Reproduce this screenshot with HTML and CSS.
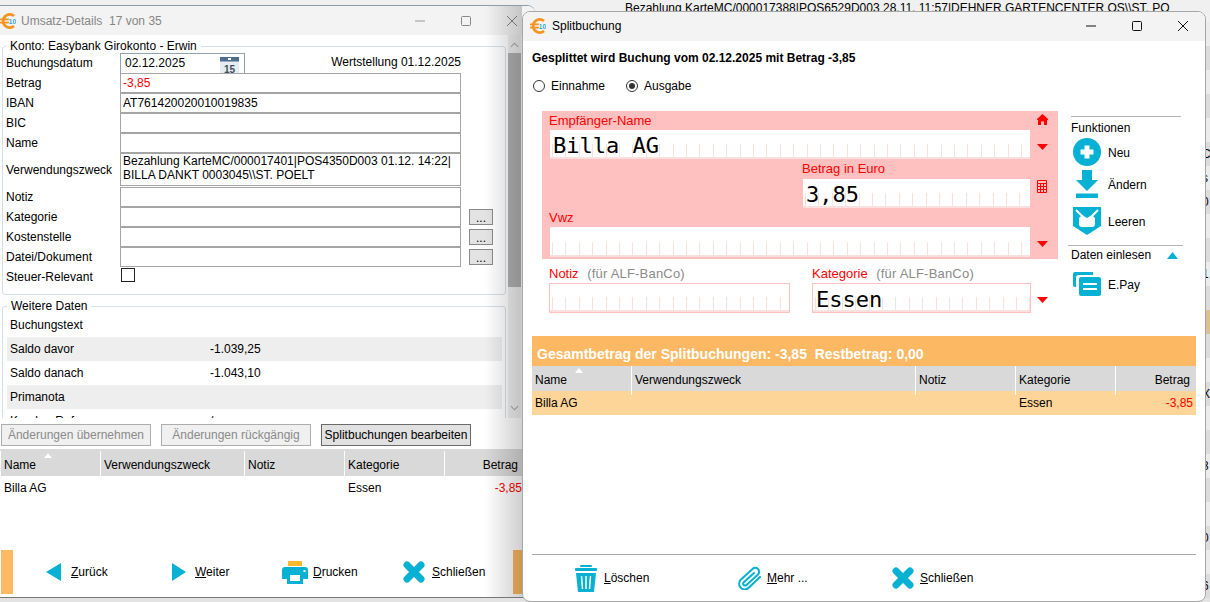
FILE: index.html
```html
<!DOCTYPE html>
<html lang="de">
<head>
<meta charset="utf-8">
<title>Splitbuchung</title>
<link rel="stylesheet" href="styles.css">
</head>
<body>
<div class="desktop">

  <div class="backdrop">
    <div class="backdrop-head">Bezahlung KarteMC/000017388|POS6529D003 28.11. 11:57|DEHNER GARTENCENTER OS\\ST. PO</div>
    <div class="backdrop-rows">
      <div></div><div></div><div></div><div></div><div></div>
      <div>C</div><div>s</div><div>0</div><div></div><div></div>
      <div>1</div><div></div><div class="tan"></div><div></div><div></div>
      <div>X</div><div>(</div><div></div><div>3</div><div></div>
      <div></div><div>0</div><div></div><div>6</div>
    </div>
  </div>

  <section class="win win-left">
    <header class="titlebar titlebar-dim">
      <svg class="logo" viewBox="0 0 16 16"><path d="M14 3A6.6 6.6 0 1 0 14 13" fill="none" stroke="#f7941d" stroke-width="2.8"/><path d="M0 6.400H9M0 9.600H9" stroke="#f7941d" stroke-width="1.800"/><text x="8.800" y="10.600" class="logo-num">10</text></svg>
      <span class="title-text">Umsatz-Details  17 von 35</span>
      <div class="controls">
        <svg viewBox="0 0 12 12"><path d="M1 6H11" stroke="#999" fill="none"/></svg>
        <svg viewBox="0 0 12 12"><rect x="1.5" y="1.5" width="9" height="9" rx="1" stroke="#888" fill="none"/></svg>
        <svg viewBox="0 0 12 12"><path d="M1 1L11 11M11 1L1 11" stroke="#888" fill="none"/></svg>
      </div>
    </header>

    <div class="scrollarea">
      <div class="scroll-main">
        <fieldset class="group">
          <legend>Konto: Easybank Girokonto - Erwin</legend>
          <div class="frow">
            <label class="flabel">Buchungsdatum</label>
            <div class="fwide">
              <div class="datebox">
                <span>02.12.2025</span>
                <svg class="cal" viewBox="0 0 19 17"><rect width="19" height="17" fill="#e6ecf0"/><rect width="19" height="4.5" fill="#4f6f90"/><rect x="8" y="1" width="3" height="2" fill="#fff"/><text x="9.5" y="15.5" class="cal-num">15</text></svg>
              </div>
              <span class="wert">Wertstellung 01.12.2025</span>
            </div>
          </div>
          <div class="frow"><label class="flabel">Betrag</label><div class="field red">-3,85</div></div>
          <div class="frow"><label class="flabel">IBAN</label><div class="field">AT761420020010019835</div></div>
          <div class="frow"><label class="flabel">BIC</label><div class="field"></div></div>
          <div class="frow"><label class="flabel">Name</label><div class="field"></div></div>
          <div class="frow frow-tall"><label class="flabel">Verwendungszweck</label><div class="field field-tall">Bezahlung KarteMC/000017401|POS4350D003 01.12. 14:22|<br>BILLA DANKT 0003045\\ST. POELT</div></div>
          <div class="frow"><label class="flabel">Notiz</label><div class="field"></div></div>
          <div class="frow"><label class="flabel">Kategorie</label><div class="field"></div><button class="dots">...</button></div>
          <div class="frow"><label class="flabel">Kostenstelle</label><div class="field"></div><button class="dots">...</button></div>
          <div class="frow"><label class="flabel">Datei/Dokument</label><div class="field"></div><button class="dots">...</button></div>
          <div class="frow"><label class="flabel">Steuer-Relevant</label><span class="check"></span></div>
        </fieldset>

        <fieldset class="group group-more">
          <legend>Weitere Daten</legend>
          <div class="drow"><span class="dkey">Buchungstext</span><span></span></div>
          <div class="drow alt"><span class="dkey">Saldo davor</span><span>-1.039,25</span></div>
          <div class="drow"><span class="dkey">Saldo danach</span><span>-1.043,10</span></div>
          <div class="drow alt"><span class="dkey">Primanota</span><span></span></div>
          <div class="drow"><span class="dkey">Kunden-Referenz</span><span>/</span></div>
        </fieldset>
      </div>
      <div class="scrollbar">
        <svg class="sb-arrow" viewBox="0 0 10 6"><path d="M1 5L5 1L9 5" fill="none" stroke="#aaa" stroke-width="1.2"/></svg>
        <div class="sb-thumb"></div>
        <svg class="sb-arrow sb-down" viewBox="0 0 10 6"><path d="M1 1L5 5L9 1" fill="none" stroke="#aaa" stroke-width="1.2"/></svg>
      </div>
    </div>

    <div class="actions">
      <button class="act" disabled>Änderungen übernehmen</button>
      <button class="act" disabled>Änderungen rückgängig</button>
      <button class="act act-on">Splitbuchungen bearbeiten</button>
    </div>

    <div class="strip"></div>
    <div class="tbl tbl-left tbl-head">
      <div class="sorted">Name</div><div>Verwendungszweck</div><div>Notiz</div><div>Kategorie</div><div class="num">Betrag</div>
    </div>
    <div class="tbl tbl-left tbl-row">
      <div>Billa AG</div><div></div><div></div><div>Essen</div><div class="num red">-3,85</div>
    </div>

    <footer class="leftfoot">
      <span class="orange-bar"></span>
      <a class="tool tool-back"><svg width="15" height="18" viewBox="0 0 15 18"><path d="M15 0V18L0 9Z" fill="#07b1d3"/></svg><span><u>Z</u>urück</span></a>
      <a class="tool tool-next"><svg width="14" height="18" viewBox="0 0 14 18"><path d="M0 0V18L14 9Z" fill="#07b1d3"/></svg><span><u>W</u>eiter</span></a>
      <a class="tool tool-print"><svg width="26" height="23" viewBox="0 0 26 23"><rect x="6" y="0" width="14" height="5" fill="#fdb92b"/><path d="M3 6H23A3 3 0 0 1 26 9V18H21V23H5V18H0V9A3 3 0 0 1 3 6Z" fill="#07b1d3"/><rect x="8" y="14" width="10" height="6" fill="#fff"/><rect x="21.500" y="9" width="2" height="2" fill="#fff"/></svg><span><u>D</u>rucken</span></a>
      <a class="tool tool-close"><svg width="22" height="22" viewBox="0 0 22 22"><path d="M4 4L18 18M18 4L4 18" stroke="#07b1d3" stroke-width="7" stroke-linecap="round"/></svg><span><u>S</u>chließen</span></a>
      <span class="orange-bar orange-bar-end"></span>
    </footer>
    <div class="win-shadow"></div>
  </section>

  <section class="win win-right">
    <header class="titlebar titlebar-main">
      <svg class="logo" viewBox="0 0 16 16"><path d="M14 3A6.6 6.6 0 1 0 14 13" fill="none" stroke="#f7941d" stroke-width="2.8"/><path d="M0 6.400H9M0 9.600H9" stroke="#f7941d" stroke-width="1.800"/><text x="8.800" y="10.600" class="logo-num">10</text></svg>
      <span class="title-text">Splitbuchung</span>
      <div class="controls controls-dark">
        <svg viewBox="0 0 12 12"><path d="M1 6H11" stroke="#111" fill="none"/></svg>
        <svg viewBox="0 0 12 12"><rect x="1.5" y="1.5" width="9" height="9" rx="1" stroke="#111" fill="none"/></svg>
        <svg viewBox="0 0 12 12"><path d="M1 1L11 11M11 1L1 11" stroke="#111" fill="none"/></svg>
      </div>
    </header>

    <div class="split-body">
      <h1 class="split-head">Gesplittet wird Buchung vom 02.12.2025 mit Betrag -3,85</h1>
      <div class="radios">
        <label class="radio"><span class="dot"></span>Einnahme</label>
        <label class="radio"><span class="dot dot-on"></span>Ausgabe</label>
      </div>

      <div class="form-area">
        <div class="form-left">
          <div class="pink">
            <div class="pink-main">
              <div class="cap">Empfänger-Name</div>
              <div class="comb comb-big">Billa AG</div>
              <div class="cap cap-amount">Betrag in Euro</div>
              <div class="comb comb-amount">3,85</div>
              <div class="cap cap-vwz">Vwz</div>
              <div class="comb comb-vwz"></div>
            </div>
            <div class="pink-icons">
              <svg class="ic-home" width="11" height="11" viewBox="0 0 11 11"><path d="M5.500 0L11 5V6H10V11H7V7.500H4V11H1V6H0V5Z" fill="#f00"/></svg>
              <svg class="ic-t1 tri" viewBox="0 0 11 6"><path d="M0 0H11L5.500 6Z" fill="#f00"/></svg>
              <svg class="ic-calc" width="10" height="13" viewBox="0 0 10 13"><path d="M.5 .5H9.500V12.500H.5ZM.5 3.500H9.500M.5 6.500H9.500M.5 9.500H9.500M3.500 3.500V12.500M6.500 3.500V12.500" fill="none" stroke="#f00"/></svg>
              <svg class="ic-t2 tri" viewBox="0 0 11 6"><path d="M0 0H11L5.500 6Z" fill="#f00"/></svg>
            </div>
          </div>
          <div class="under">
            <div class="under-col under-note">
              <div class="cap">Notiz <span class="hint">(für ALF-BanCo)</span></div>
              <div class="comb comb-out"></div>
            </div>
            <div class="under-col under-cat">
              <div class="cap">Kategorie <span class="hint">(für ALF-BanCo)</span></div>
              <div class="comb comb-out">Essen</div>
            </div>
            <svg class="ic-t3 tri" viewBox="0 0 11 6"><path d="M0 0H11L5.500 6Z" fill="#f00"/></svg>
          </div>
        </div>

        <aside class="side">
          <div class="side-line"></div>
          <div class="side-cap">Funktionen</div>
          <a class="side-item side-neu"><svg width="28" height="28" viewBox="0 0 28 28"><circle cx="14" cy="14" r="14" fill="#07b1d3"/><path d="M14 7.500V20.500M7.500 14H20.500" stroke="#fff" stroke-width="5"/></svg><span>Neu</span></a>
          <a class="side-item side-aendern"><svg width="28" height="28" viewBox="0 0 28 28"><path d="M9 0H19V10H25L14 21L3 10H9Z" fill="#07b1d3"/><rect x="3" y="23.500" width="22" height="4.500" fill="#07b1d3"/></svg><span>Ändern</span></a>
          <a class="side-item side-leeren"><svg width="28" height="28" viewBox="0 0 28 28"><path d="M0 0H28V19L14 28L0 19Z" fill="#07b1d3"/><path d="M3 3L10 10M25 3L18 10" stroke="#fff" stroke-width="2"/><path d="M9 8L14 11L19 8L22 11V17A3 3 0 0 1 19 20H9A3 3 0 0 1 6 17V11Z" fill="#fff"/></svg><span>Leeren</span></a>
          <div class="side-line side-line-full"></div>
          <div class="side-cap side-cap-row">Daten einlesen<svg width="11" height="7" viewBox="0 0 11 7"><path d="M0 7H11L5.500 0Z" fill="#07b1d3"/></svg></div>
          <a class="side-item side-epay"><svg width="28" height="24" viewBox="0 0 28 24"><path d="M2 0H20V3H6A3 3 0 0 0 3 6V15H2A2 2 0 0 1 0 13V2A2 2 0 0 1 2 0Z" fill="#07b1d3"/><rect x="6" y="5" width="22" height="19" rx="2" fill="#07b1d3"/><path d="M10 12H24M10 17H24" stroke="#fff" stroke-width="2"/></svg><span>E.Pay</span></a>
        </aside>
      </div>

      <div class="sum-bar">Gesamtbetrag der Splitbuchungen: -3,85  Restbetrag: 0,00</div>
      <div class="tbl tbl-right tbl-head">
        <div class="sorted">Name</div><div>Verwendungszweck</div><div>Notiz</div><div>Kategorie</div><div class="num">Betrag</div>
      </div>
      <div class="tbl tbl-right tbl-row tbl-row-sel">
        <div>Billa AG</div><div></div><div></div><div>Essen</div><div class="num red">-3,85</div>
      </div>

      <footer class="rightfoot">
        <a class="tool tool-del"><svg width="22" height="27" viewBox="0 0 22 27"><rect x="5" y="0" width="12" height="2" rx="1" fill="#07b1d3"/><rect x="0" y="3" width="22" height="3" rx="1" fill="#07b1d3"/><path d="M1 8H21L19 27H3Z" fill="#07b1d3"/><path d="M6.500 11L7.500 24M11 11V24M15.500 11L14.500 24" stroke="#fff" stroke-width="1.500"/></svg><span><u>L</u>öschen</span></a>
        <a class="tool tool-more"><svg width="26" height="24" viewBox="0 0 26 24"><path d="M24 11L13 21.500A5.600 5.600 0 0 1 4.500 14L16.500 3A3.800 3.800 0 0 1 22 8.500L10.500 19A1.900 1.900 0 0 1 7.800 16.300L18 7" fill="none" stroke="#07b1d3" stroke-width="2" stroke-linecap="round"/></svg><span><u>M</u>ehr ...</span></a>
        <a class="tool tool-x"><svg width="22" height="24" viewBox="0 0 22 24"><path d="M4 5L18 19M18 5L4 19" stroke="#07b1d3" stroke-width="7" stroke-linecap="round"/></svg><span><u>S</u>chließen</span></a>
      </footer>
    </div>
  </section>
</div>
</body>
</html>
```

FILE: styles.css
```css
* { box-sizing: border-box; }
html, body { margin: 0; padding: 0; }
body { font: 12px/14px "Liberation Sans", Arial, sans-serif; color: #000; background: #e3e3e3; }

.desktop { position: relative; width: 1210px; height: 602px; overflow: hidden; background: #e3e3e3; }

/* window lying behind both dialogs */
.backdrop { position: absolute; inset: 0; }
.backdrop-head { height: 22px; padding: 1px 0 0 625px; line-height: 14px; background: #f0f0f0; white-space: pre; }
.backdrop-rows { margin-left: 1201px; }
.backdrop-rows div { height: 24px; line-height: 24px; padding-left: 1px; background: #ececec; overflow: hidden; }
.backdrop-rows div:nth-child(even) { background: #dcdcdc; }
.backdrop-rows div.tan { background: #dcc08f; }

/* windows */
.win { position: absolute; background: #fff; display: flex; flex-direction: column; overflow: hidden; }
.win-left { left: 0; top: 5px; width: 535px; height: 593px; border-top: 1px solid #8f9ca6; border-bottom: 1px solid #777; border-radius: 0 8px 0 0; }
.win-right { left: 522px; top: 11px; width: 684px; height: 591px; border: 1px solid #a6a6a6; border-radius: 8px; }

.titlebar { flex: none; height: 29px; display: flex; align-items: center; background: #f3f3f3; padding-left: 7px; }
.titlebar-dim { padding-left: 0; }
.titlebar-main { padding-bottom: 1px; }
.logo { width: 16px; height: 16px; flex: none; margin-right: 6px; }
.titlebar-dim .logo { margin-right: 5px; }
.logo-num { font: bold 6.500px "Liberation Sans", sans-serif; fill: #1ba6d6; stroke: #fff; stroke-width: .6px; paint-order: stroke; }
.title-text { white-space: pre; }
.titlebar-dim .title-text { color: #868686; }
.controls { margin-left: auto; display: flex; gap: 34px; padding-right: 17px; }
.controls svg { width: 12px; height: 12px; display: block; }
.controls-dark { padding-right: 16px; }

/* left dialog */
.scrollarea { flex: none; height: 383px; display: flex; overflow: hidden; }
.scroll-main { width: 508px; padding: 4px 0 0 2px; }
.group { margin: 0; padding: 0 3px 0 3px; width: 504px; border: 1px solid #d5dfe6; border-radius: 3px; min-width: 0; }
.group legend { margin-left: 0; padding: 0 4px 0 4px; line-height: 14px; height: 14px; }
.group > .frow:last-child { height: 27px; }

.frow { display: flex; height: 20px; }
.frow-tall { height: 34px; }
.flabel { width: 114px; flex: none; line-height: 20px; }
.frow-tall .flabel { line-height: 34px; }
.fwide { width: 341px; display: flex; justify-content: space-between; }
.datebox { width: 125px; height: 20px; border: 1px solid #93a3b1; border-bottom: 0; padding: 2px 0 0 4px; display: flex; justify-content: space-between; }
.cal { width: 19px; height: 17px; margin: 1px 5px 0 0; }
.cal-num { font: bold 10px "Liberation Sans", sans-serif; fill: #3f4f5f; text-anchor: middle; }
.wert { line-height: 19px; }
.field { width: 341px; height: 20px; border: 1px solid #a5a5a5; padding: 2px 2px; white-space: nowrap; overflow: hidden; }
.field-tall { height: 33px; padding: 0 2px; margin-bottom: 1px; border-color: #a5a5a5; }
.red { color: #f00; }
.dots { width: 24px; height: 16px; margin: 2px 0 0 8px; padding: 2px 0 0; border: 1px solid #8a8a8a; background: #e3e3e3; font: 12px/12px "Liberation Sans", sans-serif; }
.check { width: 14px; height: 14px; margin: 1px 0 0 1px; border: 1px solid #222; }

.group-more { margin-top: 4px; height: 200px; padding: 0 3px 0 4px; }
.drow { height: 24px; display: flex; line-height: 24px; padding-left: 3px; width: 495px; }
.drow.alt { background: #eee; }
.dkey { width: 200px; }

.scrollbar { width: 13px; background: #f0f0f0; display: flex; flex-direction: column; align-items: center; padding-top: 7px; }
.sb-arrow { width: 9px; height: 6px; flex: none; }
.sb-thumb { width: 13px; height: 234px; margin-top: 5px; background: #b2b2b2; flex: none; }
.sb-down { margin-top: 118px; }

.actions { flex: none; display: flex; gap: 10px; padding: 6px 0 0 1px; }
.act { width: 150px; height: 22px; padding: 0; font: 12px "Liberation Sans", sans-serif; background: #f0f0f0; border: 1px solid #adadad; color: #8a8a8a; }
.act-on { background: #e1e1e1; border-color: #6a6a6a; color: #000; }

.strip { flex: none; height: 2px; margin-top: 3px; background: #d9d9d9; }

.tbl { flex: none; display: grid; }
.tbl > div { padding-left: 3px; position: relative; white-space: nowrap; }
.tbl > div + div { border-left: 1px solid transparent; }
.tbl-head { height: 25px; background: #d9d9d9; line-height: 29px; }
.tbl-head > div + div { border-left-color: #fff; }
.tbl-row { height: 24px; line-height: 24px; }
.tbl-left { grid-template-columns: 99px 144px 100px 100px 78px; margin-left: 1px; }
.tbl-left .num { text-align: right; padding-right: 4px; }
.tbl-left.tbl-row .num { padding-right: 0; }
.tbl-right { grid-template-columns: 99px 284px 100px 100px 81px; }
.num { text-align: right; padding-right: 6px; }
.tbl-right.tbl-head .num { padding-right: 6px; }
.tbl-right.tbl-row .num { padding-right: 3px; }
.tbl-row-sel { background: #fdd598; }
.sorted::after { content: ""; position: absolute; top: 2px; left: 43px; border: 4px solid transparent; border-top: 0; border-bottom: 5px solid #fff; }

.leftfoot { margin-top: auto; margin-bottom: 3px; height: 44px; display: flex; align-items: center; padding-left: 1px; }
.orange-bar { width: 12px; height: 44px; background: #fdb863; flex: none; }
.orange-bar-end { margin-left: auto; width: 22px; }
.tool { display: flex; align-items: center; color: #000; }
.tool svg { flex: none; }
.tool-back { margin-left: 33px; width: 126px; gap: 10px; }
.tool-next { width: 110px; gap: 9px; }
.tool-print { width: 121px; gap: 5px; }
.tool-close { gap: 7px; }

.win-shadow { position: absolute; top: 0; bottom: 0; left: 485px; width: 37px; pointer-events: none; background: linear-gradient(to right, rgba(0,0,0,0), rgba(0,0,0,.19)); }

/* split dialog */
.split-body { flex: 1; display: flex; flex-direction: column; padding: 10px 9px 0; }
.split-head { margin: 0; font-size: 12px; line-height: 14px; font-weight: bold; }
.radios { display: flex; margin-top: 14px; height: 14px; }
.radio { display: flex; align-items: center; gap: 6px; }
.radio:first-child { width: 93px; }
.dot { flex: none; width: 12px; height: 12px; margin-left: 1px; border: 1px solid #333; border-radius: 50%; display: flex; align-items: center; justify-content: center; }
.dot-on::after { content: ""; width: 6px; height: 6px; border-radius: 50%; background: #333; }

.form-area { display: flex; margin: 18px 0 0 10px; height: 202px; }
.form-left { width: 516px; flex: none; }
.pink { display: flex; height: 148px; background: #ffc0c0; padding: 3px 0 0 7px; }
.pink-main { width: 481px; flex: none; }
.pink-icons { margin-left: 7px; display: flex; flex-direction: column; }
.pink-icons svg { display: block; flex: none; }
.tri { width: 11px; height: 6px; display: block; }
.ic-t1 { margin-top: 19px; }
.ic-calc { margin-top: 30px; }
.ic-t2 { margin-top: 48px; }

.cap { color: #f00; white-space: pre; font-size: 13px; }
.hint { color: #8a8a8a; margin-left: 5px; letter-spacing: .2px; }
.cap-amount { margin: 3px 0 0 253px; }
.cap-vwz { margin-top: 3px; }

.comb { background-color: #fff; margin-left: 1px; height: 29px; margin-top: 2px; padding: 0 0 0 3px; font: 22px/31px "DejaVu Sans Mono", monospace; overflow: hidden;
  background-image: linear-gradient(#fbe0e0, #fbe0e0), repeating-linear-gradient(to right, #fbe0e0 0 1px, transparent 1px 13.4px);
  background-size: 100% 2px, 100% 15px;
  background-position: 0 100%, 2px 100%;
  background-repeat: no-repeat; }
.comb-amount { margin: 3px 0 0 254px; line-height: 32px; }
.comb-vwz { height: 30px; }
.comb-out { margin-left: 0; height: 30px; border: 1px solid #ffc0c0; padding-left: 3px; line-height: 32px; }

.under { display: flex; margin: 8px 0 0 7px; }
.under-note { width: 241px; }
.under-cat { width: 219px; margin-left: 22px; }
.ic-t3 { margin: 30px 0 0 6px; }

.side { width: 115px; margin-left: 10px; padding-top: 5px; display: flex; flex-direction: column; flex: none; }
.side-line { height: 1px; background: #b4b4b8; margin: 0 2px 0 3px; flex: none; }
.side-line-full { margin: 10px 0 0; }
.side-cap { margin: 4px 0 0 3px; }
.side-cap-row { display: flex; justify-content: space-between; align-items: center; margin: 2px 5px 0 3px; }
.side-item { display: flex; align-items: center; gap: 7px; margin-left: 5px; height: 28px; flex: none; }
.side-item span { padding-top: 2px; }
.side-neu { margin-top: 3px; }
.side-aendern { margin-top: 4px; }
.side-leeren { margin-top: 9px; }
.side-epay { margin-top: 10px; height: 24px; }

.sum-bar { margin-top: 23px; height: 30px; flex: none; background: #fdb863; color: #fff; font-size: 14px; font-weight: bold; padding: 11px 0 0 5px; white-space: pre; }

.rightfoot { margin-top: auto; height: 47px; border-top: 1px solid #a8a8a8; display: flex; align-items: center; padding: 0 0 0 43px; }
.tool-del { width: 161px; gap: 7px; }
.tool-more { width: 156px; gap: 5px; }
.tool-x { gap: 6px; }
```
